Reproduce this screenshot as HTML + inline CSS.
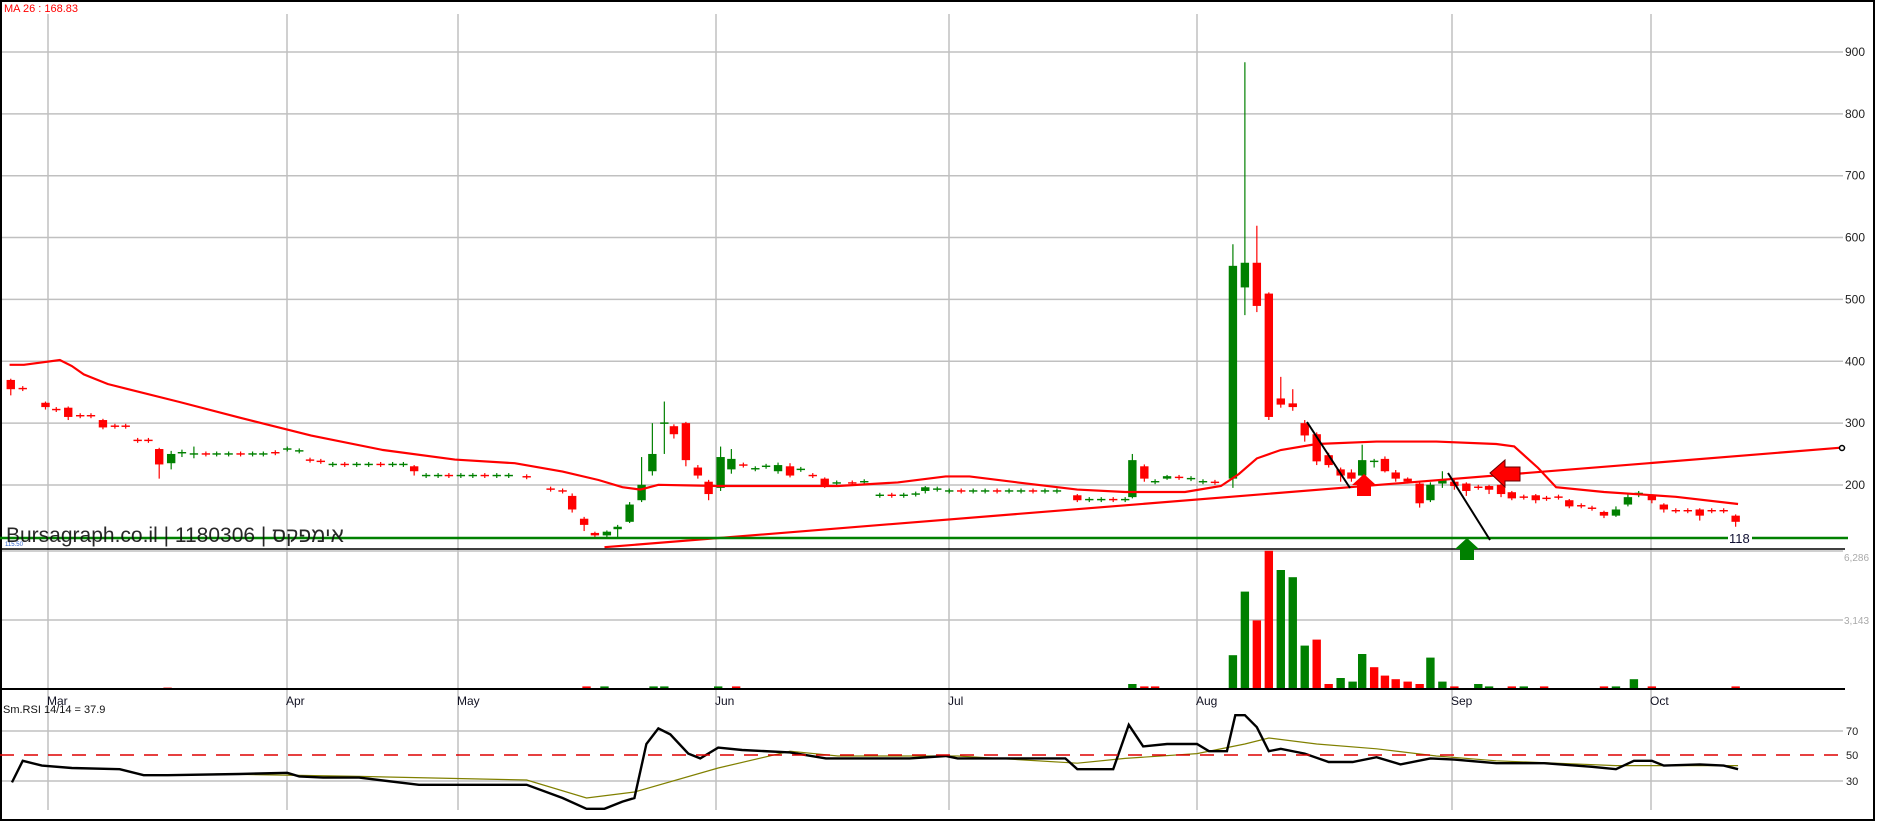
<!DOCTYPE html>
<html><head><meta charset="utf-8"><style>
html,body{margin:0;padding:0;background:#fff;width:1880px;height:823px;overflow:hidden}
svg{display:block}
text{font-family:"Liberation Sans","Noto Sans CJK JP",sans-serif}
</style></head><body>
<svg id="s" width="1880" height="823" viewBox="0 0 1880 823" xmlns="http://www.w3.org/2000/svg">
<rect x="0" y="0" width="1880" height="823" fill="#fff"/>
<g id="grid" stroke="#c0c0c0" stroke-width="1.5"></g>
<rect x="1" y="1" width="1873" height="819" fill="none" stroke="#000" stroke-width="2"/>
<text x="4" y="12" font-size="11" fill="#f00">MA 26 : 168.83</text>
<g id="axis" font-size="12" fill="#222"></g>
<g id="data" transform="scale(1.197,1.2)"></g>
<line x1="0" y1="538" x2="1848" y2="538" stroke="#008000" stroke-width="2.5"/>
<rect x="1728" y="531" width="24" height="14" fill="#fff"/>
<text x="1729" y="543" font-size="13" fill="#113">118</text>
<line x1="0" y1="549" x2="1845" y2="549" stroke="#000" stroke-width="1.5"/>
<text x="5" y="546" font-size="6" fill="#36c">115.50</text>
<text x="6" y="542" font-size="21" fill="#111" opacity="0.9">Bursagraph.co.il | 1180306 | אימפקס</text>
<line x1="0" y1="689" x2="1845" y2="689" stroke="#000" stroke-width="2"/>
<text x="3" y="713" font-size="11" fill="#111">Sm.RSI 14/14 = 37.9</text>
<line x1="0" y1="755" x2="1845" y2="755" stroke="#d00" stroke-width="1.5" stroke-dasharray="14,10"/>
<!-- trend + marks (real coords) -->
<line x1="1307" y1="422" x2="1350" y2="488" stroke="#000" stroke-width="2"/>
<line x1="1448" y1="473" x2="1490" y2="540" stroke="#000" stroke-width="2"/>
<path d="M1357,496 L1357,485 L1352,485 L1364,474 L1376,485 L1371,485 L1371,496 Z" fill="#f00"/>
<path d="M1460,560 L1460,549 L1455,549 L1467,538 L1479,549 L1474,549 L1474,560 Z" fill="#008000"/>
<path d="M1490,473 L1505,460 L1505,467 L1520,467 L1520,481 L1505,481 L1505,487 Z" fill="#f00" stroke="#600" stroke-width="1"/>
<circle cx="1842" cy="448" r="2.5" fill="#fff" stroke="#000" stroke-width="1.5"/>
</svg>
<script>
var NS="http://www.w3.org/2000/svg";
function el(p,t,a){var e=document.createElementNS(NS,t);for(var k in a)e.setAttribute(k,a[k]);p.appendChild(e);return e;}
var grid=document.getElementById('grid'),axis=document.getElementById('axis'),D=document.getElementById('data');
// horizontal price grid
var py=function(p){return 485-(p-200)*0.6186;};
for(var p=200;p<=900;p+=100){var y=py(p);el(grid,'line',{x1:0,y1:y,x2:1843,y2:y});var t=el(axis,'text',{x:1845,y:y+4});t.textContent=p;}
// volume grid
el(grid,'line',{x1:0,y1:620,x2:1843,y2:620});el(grid,'line',{x1:0,y1:551,x2:1843,y2:551});
var t=el(axis,'text',{x:1844,y:624,'font-size':10,fill:'#aaa'});t.textContent='3,143';
t=el(axis,'text',{x:1844,y:561,'font-size':10,fill:'#aaa'});t.textContent='6,286';
// rsi grid
[[731,'70'],[781,'30']].forEach(function(a){el(grid,'line',{x1:0,y1:a[0],x2:1843,y2:a[0]});var t=el(axis,'text',{x:1846,y:a[0]+4,'font-size':11});t.textContent=a[1];});
t=el(axis,'text',{x:1846,y:759,'font-size':11});t.textContent='50';
// vertical month lines
[[48,'Mar'],[287,'Apr'],[458,'May'],[716,'Jun'],[949,'Jul'],[1197,'Aug'],[1452,'Sep'],[1651,'Oct']].forEach(function(m){
 el(grid,'line',{x1:m[0],y1:14,x2:m[0],y2:810});var t=el(axis,'text',{x:m[0]-1,y:705,'font-size':12,fill:'#112'});t.textContent=m[1];});
// candles in perceived coords
function Y(p){return 404-(p-200)*0.514;}
var C=[[9,370,355,372,345],[19,356,356],[38,333,326,335,322],[47,322,322],[57,325,310,327,305],[67,312,312],[76,312,312],[86,305,293,307,290],[96,295,295],[105,295,295],[115,272,272],[124,272,272],
[133,258,233,260,210],[143,235,250,255,225],[152,250,252,257,245],[162,250,250,262,243],[172,250,250],[181,250,250],[191,250,250],[201,250,250],[211,250,250],[220,250,250],[230,252,252],[240,258,258],[250,255,255],[259,240,240],[268,238,238],
[278,233,233],[288,233,233],[298,233,233],[308,233,233],[318,233,233],[328,233,233],[337,233,233],[346,230,222,232,215],[356,215,215],[366,215,215],[375,215,215],[385,215,215],[395,215,215],[405,215,215],[415,215,215],[425,215,215],[440,213,213],[460,193,193],[470,190,190],
[478,182,160,186,155],[488,145,135,148,125],[497,122,118,124,115],[507,118,124,126,115],[516,128,132,135,115],[526,140,168,172,138],[536,175,200,245,172],[545,222,250,300,215],[555,300,300,335,250],[563,295,282,298,275],[573,300,240,302,230],[583,228,215,232,210],[592,205,185,208,175],[602,195,245,262,190],[611,225,242,258,218],[621,232,232],[631,226,226],[640,230,230],[650,222,232,236,218],[660,230,215,235,212],[669,225,225],[679,215,215],[689,210,198,212,195],[699,203,203],[712,203,203],[722,205,205],
[735,183,183],[745,183,183],[755,183,183],[765,185,185],[773,190,196,198,186],[783,193,193],[793,190,190],[803,190,190],[813,190,190],[823,190,190],[833,190,190],[843,190,190],[853,190,190],[863,190,190],[873,190,190],[883,190,190],[900,183,175,185,172],[910,176,176],[920,176,176],[930,176,176],[940,176,176],
[946,180,240,250,178],[956,230,210,233,205],[965,205,205],[975,210,214,216,208],[985,212,212],[995,210,210],[1005,205,205],[1015,204,204],[1030,210,555,590,195],[1040,520,560,885,475],[1050,560,490,620,480],[1060,510,310,512,305],[1070,340,330,375,325],[1080,332,326,355,320],
[1090,300,280,305,270],[1100,282,238,285,232],[1110,248,232,252,228],[1120,225,215,228,205],[1129,220,210,225,205],[1138,215,240,265,212],[1148,238,238,242,228],[1157,242,222,246,220],[1166,220,210,224,205],[1176,210,205,212,202],[1186,202,170,204,163],[1195,175,200,204,172],[1205,202,208,222,195],[1215,205,198,208,192],[1225,202,190,204,182],[1235,196,196],[1244,198,192,200,185],[1254,200,185,202,180],[1263,188,178,190,175],[1273,180,180],[1283,183,175,185,170],[1292,178,178],[1302,180,180],[1311,175,165,177,162],[1321,166,166],[1330,162,162],
[1340,156,150,158,146],[1350,150,160,165,148],[1360,168,180,186,165],[1369,185,186,190,180],[1380,182,175,184,170],[1390,168,160,170,155],[1400,158,158],[1410,158,158],[1420,160,150,162,142],[1430,158,158],[1440,158,158],[1450,150,140,152,132]];
var greenSet={};
C.forEach(function(c,i){
 var x=c[0],o=c[1],cl=c[2],h=c[3]||Math.max(o,cl)+4,l=c[4]||Math.min(o,cl)-4;
 var up=cl>o;if(o==cl){up=(i%3!=1&&x>140&&!(x>250&&x<270)&&!(x>450&&x<475)&&!(x>1150));}
 var col=up?'#008000':'#f00';
 el(D,'line',{x1:x,y1:Y(h),x2:x,y2:Y(l),stroke:col,'stroke-width':1});
 var top=Y(Math.max(o,cl)),bot=Y(Math.min(o,cl));
 if(bot-top<1.2){el(D,'line',{x1:x-3.5,y1:top,x2:x+3.5,y2:top,stroke:col,'stroke-width':1.2});}
 else el(D,'rect',{x:x-3.5,y:top,width:7,height:bot-top,fill:col});
});
// MA line
var ma=[[8,304],[20,304],[50,300],[60,305],[70,312],[90,320],[150,335],[200,348],[260,363],[320,375],[380,383],[430,386],[470,393],[500,400],[520,406],[535,408],[550,404],[600,405],[640,405],[700,405],[750,402],[790,397],[810,397],[850,402],[900,408],[940,410],[990,410],[1020,405],[1035,395],[1050,382],[1070,375],[1100,370],[1150,368],[1200,368],[1250,370],[1265,372],[1285,390],[1300,406],[1340,410],[1400,414],[1452,420]];
el(D,'polyline',{points:ma.map(function(p){return p.join(',')}).join(' '),fill:'none',stroke:'#f00','stroke-width':1.8});
el(D,'line',{x1:505,y1:456,x2:1539,y2:373,stroke:'#f00','stroke-width':1.8});
// volume
var V=[[1030,546,1],[1040,493,1],[1050,517,0],[1060,459,0],[1070,475,1],[1080,481,1],[1090,538,1],[1100,533,0],[1110,570,0],[1120,565,1],[1130,568,1],[1138,545,1],[1148,556,0],[1157,563,0],[1166,566,0],[1176,568,0],[1186,570,0],[1195,548,1],[1205,568,1],[1215,572,0],[1235,570,1],[1244,572,1],[1263,572,0],[1273,572,1],[1365,566,1],[1380,572,0],[1450,572,0],[1340,572,0],[1350,572,1],[1290,572,0],[505,572,1],[546,572,1],[555,572,1],[490,572,0],[946,570,1],[956,572,0],[965,572,0],[600,572,1],[615,572,0],[140,573,0]];
V.forEach(function(v){el(D,'rect',{x:v[0]-3.5,y:v[1],width:7,height:574-v[1],fill:v[2]?'#008000':'#f00'});});
// RSI
var sig=[[180,645],[300,647],[440,650],[490,665],[530,660],[600,640],[660,626],[700,630],[800,630],[900,636],[940,632],[1000,628],[1040,620],[1060,615],[1100,620],[1150,624],[1200,630],[1250,634],[1300,636],[1350,638],[1400,638],[1452,638]];
el(D,'polyline',{points:sig.map(function(p){return p.join(',')}).join(' '),fill:'none',stroke:'#808000','stroke-width':1});
var rsi=[[10,652],[19,634],[35,638],[60,640],[100,641],[120,646],[140,646],[200,645],[240,644],[250,647],[270,648],[300,648],[350,654],[440,654],[470,665],[490,674],[505,674],[520,668],[530,665],[540,620],[550,607],[560,612],[575,628],[585,632],[600,623],[620,625],[660,627],[690,632],[720,632],[760,632],[790,630],[800,632],[890,632],[900,641],[930,641],[943,604],[955,622],[975,620],[1000,620],[1010,626],[1025,626],[1032,596],[1040,596],[1050,606],[1060,626],[1070,624],[1090,628],[1110,635],[1130,635],[1150,631],[1170,637],[1195,632],[1215,633],[1250,636],[1290,636],[1330,639],[1350,641],[1365,634],[1380,634],[1390,638],[1420,637],[1440,638],[1452,641]];
el(D,'polyline',{points:rsi.map(function(p){return p.join(',')}).join(' '),fill:'none',stroke:'#000','stroke-width':2});
</script>
</body></html>
